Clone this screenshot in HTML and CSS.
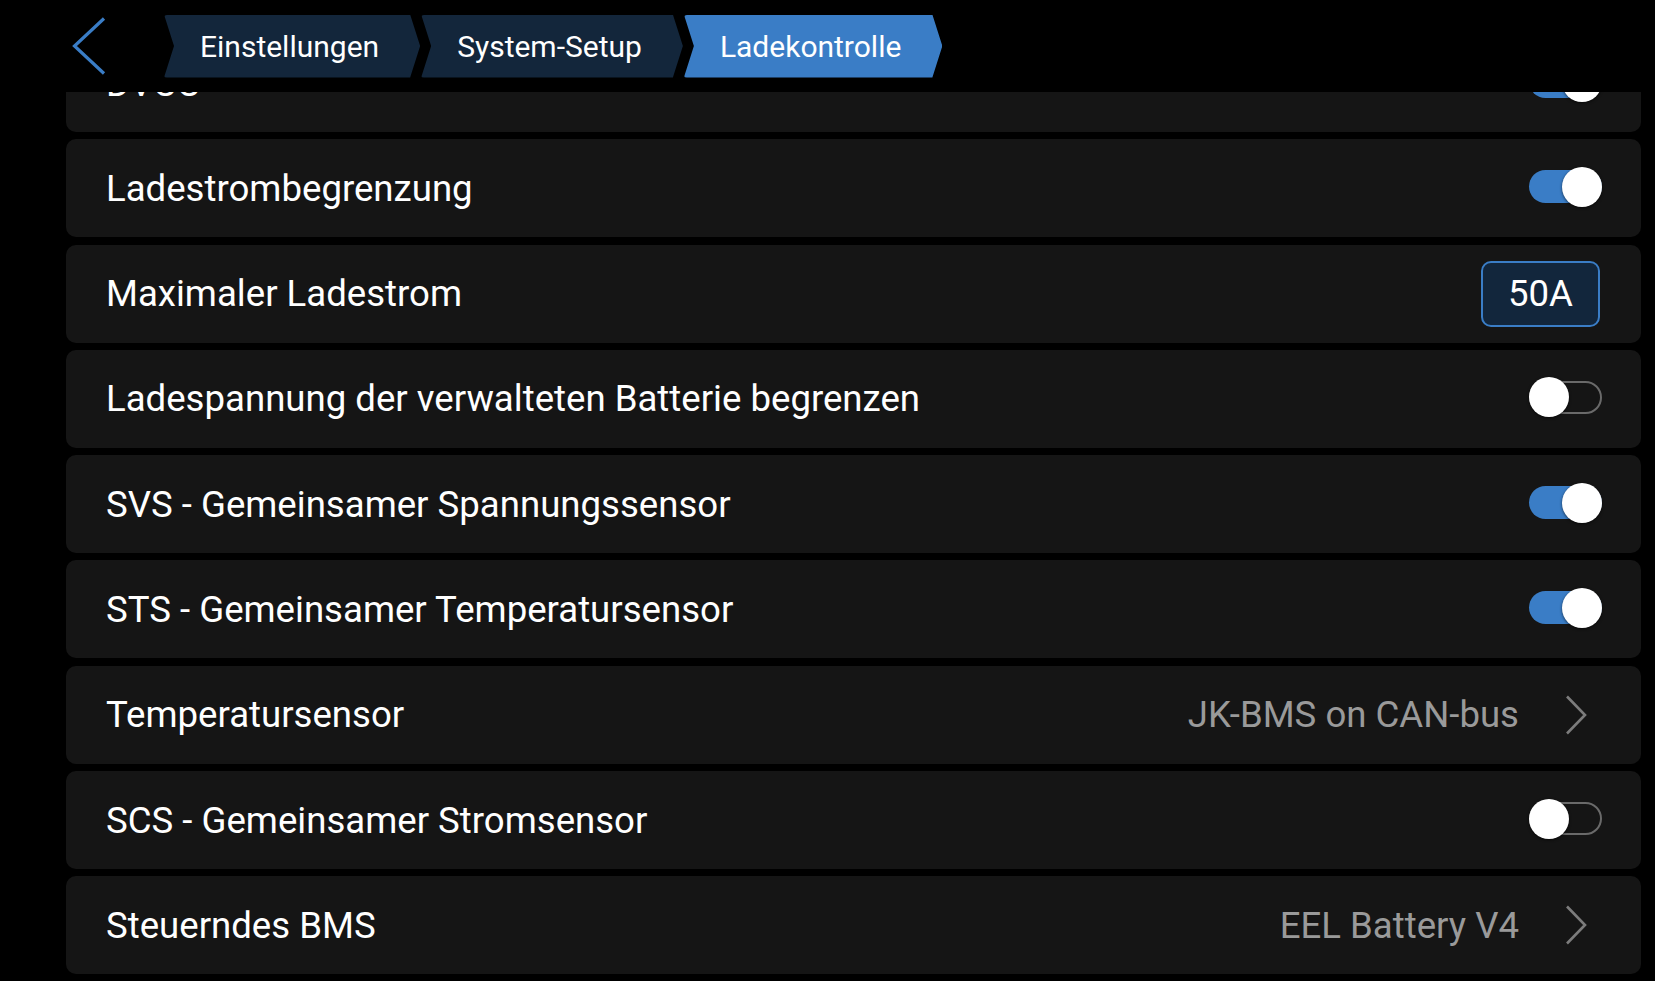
FILE: index.html
```html
<!DOCTYPE html>
<html lang="de">
<head>
<meta charset="utf-8">
<title>Ladekontrolle</title>
<link rel="stylesheet" href="styles.css">
</head>
<body>
<div class="screen">
  <header class="topbar">
    <button class="back" aria-label="Zurück">
      <svg width="34" height="58" viewBox="0 0 34 58"><path d="M32 1.5 L2.5 29 L32 56.5" fill="none" stroke="#3a7dc6" stroke-width="3.2" stroke-linejoin="miter"/></svg>
    </button>
    <nav class="crumbs">
      <span class="crumb">Einstellungen</span>
      <span class="crumb">System-Setup</span>
      <span class="crumb crumb-active">Ladekontrolle</span>
    </nav>
  </header>
  <main class="viewport">
    <div class="list">
      <div class="row"><span class="label">DVCC</span><span class="toggle on"><span class="track"></span><span class="knob"></span></span></div>
      <div class="row"><span class="label">Ladestrombegrenzung</span><span class="toggle on"><span class="track"></span><span class="knob"></span></span></div>
      <div class="row"><span class="label">Maximaler Ladestrom</span><span class="valuebox">50A</span></div>
      <div class="row"><span class="label">Ladespannung der verwalteten Batterie begrenzen</span><span class="toggle off"><span class="track"></span><span class="knob"></span></span></div>
      <div class="row"><span class="label">SVS - Gemeinsamer Spannungssensor</span><span class="toggle on"><span class="track"></span><span class="knob"></span></span></div>
      <div class="row"><span class="label">STS - Gemeinsamer Temperatursensor</span><span class="toggle on"><span class="track"></span><span class="knob"></span></span></div>
      <div class="row"><span class="label">Temperatursensor</span><span class="nav"><span class="value">JK-BMS on CAN-bus</span><svg class="chev" width="22" height="40" viewBox="0 0 22 40"><path d="M2 1.5 L20 20 L2 38.5" fill="none" stroke="#7c7c7c" stroke-width="2.6"/></svg></span></div>
      <div class="row"><span class="label">SCS - Gemeinsamer Stromsensor</span><span class="toggle off"><span class="track"></span><span class="knob"></span></span></div>
      <div class="row"><span class="label">Steuerndes BMS</span><span class="nav"><span class="value">EEL Battery V4</span><svg class="chev" width="22" height="40" viewBox="0 0 22 40"><path d="M2 1.5 L20 20 L2 38.5" fill="none" stroke="#7c7c7c" stroke-width="2.6"/></svg></span></div>
    </div>
  </main>
</div>
</body>
</html>
```

FILE: styles.css
```css
html, body {
  margin: 0;
  padding: 0;
  background: #000;
}
body {
  font-family: Roboto, "Noto Sans", "Liberation Sans", sans-serif;
  color: #fff;
}
.screen {
  width: 1655px;
  height: 981px;
  display: flex;
  flex-direction: column;
  overflow: hidden;
  background: #000;
}
.topbar {
  height: 92px;
  flex: 0 0 92px;
  display: flex;
  align-items: center;
  background: #000;
  position: relative;
  z-index: 2;
}
.back {
  background: none;
  border: 0;
  padding: 0;
  margin: 0 0 0 72px;
  width: 34px;
  height: 58px;
  display: flex;
}
.crumbs {
  display: flex;
  margin-left: 58px;
  gap: 1px;
}
.crumb {
  height: 63px;
  display: flex;
  align-items: center;
  padding: 0 41px 0 36px;
  background: #13263b;
  font-size: 30px;
  color: #fff;
  clip-path: polygon(0 0, calc(100% - 10px) 0, 100% 50%, calc(100% - 10px) 100%, 0 100%, 10px 50%);
  border-radius: 3px;
}
.crumb-active {
  background: #3a7dc6;
}
.viewport {
  flex: 1;
  overflow: hidden;
  padding: 0 14px 0 66px;
}
.list {
  margin-top: -58px;
  display: flex;
  flex-direction: column;
  gap: 7.3px;
}
.row {
  height: 98px;
  background: #151515;
  border-radius: 10px;
  display: flex;
  align-items: center;
  justify-content: space-between;
  padding: 0 39px 0 40px;
}
.label {
  font-size: 36.6px;
  color: #fff;
}
.toggle {
  position: relative;
  width: 73px;
  height: 40px;
  flex: 0 0 73px;
  margin-bottom: 3px;
}
.track {
  position: absolute;
  left: 0;
  right: 0;
  top: 3.5px;
  height: 33px;
  border-radius: 17px;
  box-sizing: border-box;
}
.toggle.on .track {
  background: #3a7dc6;
}
.toggle.off .track {
  border: 2.5px solid #6a6a6a;
}
.knob {
  position: absolute;
  top: 0;
  width: 40px;
  height: 40px;
  border-radius: 50%;
  background: #fff;
  box-shadow: 0 1px 3px rgba(0, 0, 0, 0.6);
}
.toggle.on .knob { right: 0; }
.toggle.off .knob { left: 0; }
.valuebox {
  width: 119px;
  height: 66px;
  box-sizing: border-box;
  border: 2.5px solid #3a7dc6;
  border-radius: 10px;
  background: #12263c;
  display: flex;
  align-items: center;
  justify-content: center;
  font-size: 36.6px;
  color: #fff;
  margin-right: 2px;
}
.nav {
  display: flex;
  align-items: center;
  gap: 46px;
  margin-right: 15px;
}
.value {
  font-size: 36.6px;
  color: #9a9a9a;
}
.chev {
  display: block;
}
```
